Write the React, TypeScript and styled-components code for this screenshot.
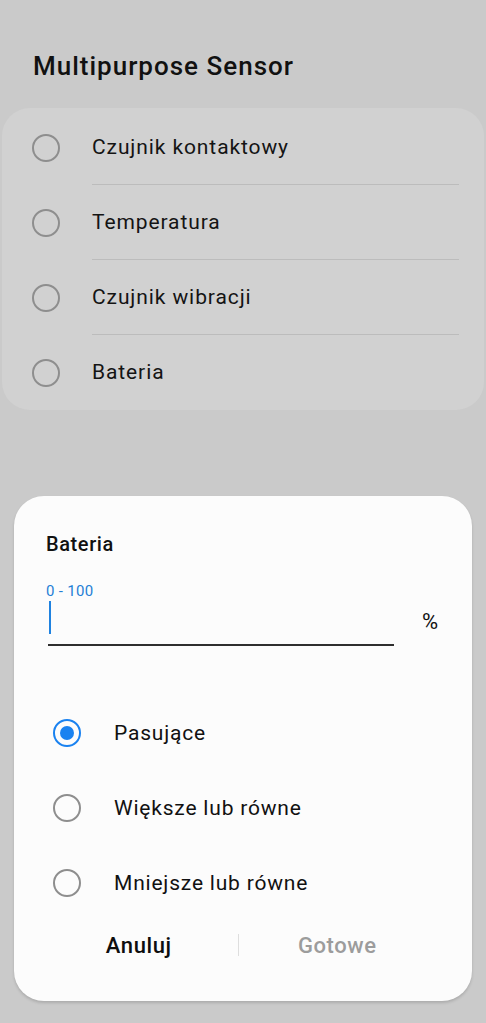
import React from 'react';
import styled, { createGlobalStyle } from 'styled-components';

const GlobalStyle = createGlobalStyle`
  html, body {
    margin: 0;
    padding: 0;
    background: #cacaca;
    font-family: Roboto, "Noto Sans", sans-serif;
  }
`;

const Screen = styled.div`
  width: 486px;
  height: 1023px;
  background: #cacaca;
  position: relative;
  overflow: hidden;
`;

const Header = styled.h1`
  margin: 0;
  padding: 51px 0 0 33px;
  height: 57px;
  font-size: 26px;
  line-height: 30px;
  font-weight: 500;
  color: #111;
  letter-spacing: 1px;
`;

const ListCard = styled.div`
  margin: 0 2px;
  background: #d1d1d1;
  border-radius: 28px;
  padding: 2px 0 0;
  height: 300px;
`;

const ListRow = styled.div`
  display: flex;
  align-items: center;
  height: 75px;
`;

const Circle = styled.span<{ $checked?: boolean; $size: number }>`
  box-sizing: border-box;
  width: ${({ $size }) => $size}px;
  height: ${({ $size }) => $size}px;
  border-radius: 50%;
  border: 2px solid ${({ $checked }) => ($checked ? '#1a82f0' : '#8e8e8e')};
  display: flex;
  align-items: center;
  justify-content: center;
  flex-shrink: 0;
  &::after {
    content: '';
    display: ${({ $checked }) => ($checked ? 'block' : 'none')};
    width: 14px;
    height: 14px;
    border-radius: 50%;
    background: #1a82f0;
  }
`;

const ListLabel = styled.div<{ $divider: boolean }>`
  flex: 1;
  height: 75px;
  margin: 0 25px 0 32px;
  display: flex;
  align-items: center;
  font-size: 21px;
  letter-spacing: 0.9px;
  color: #141414;
  border-bottom: 1px solid ${({ $divider }) => ($divider ? '#bcbcbc' : 'transparent')};
  box-sizing: border-box;
`;

const RowCircleBox = styled.div`
  padding-left: 30px;
  display: flex;
`;

const Dialog = styled.div`
  position: absolute;
  left: 14px;
  top: 496px;
  width: 458px;
  height: 505px;
  background: #fcfcfc;
  border-radius: 30px;
  box-shadow: 0 2px 3px rgba(0, 0, 0, 0.15);
  box-sizing: border-box;
  padding: 36px 32px 0 32px;
  display: flex;
  flex-direction: column;
`;

const DialogTitle = styled.div`
  font-size: 20px;
  font-weight: 500;
  letter-spacing: 0.6px;
  color: #111;
  height: 24px;
  line-height: 24px;
`;

const Hint = styled.div`
  margin-top: 26px;
  font-size: 15px;
  letter-spacing: 0.3px;
  color: #1f7fd6;
  height: 18px;
  line-height: 18px;
`;

const InputRow = styled.div`
  display: flex;
  align-items: center;
`;

const InputField = styled.div`
  width: 346px;
  margin-left: 2px;
  height: 44px;
  border-bottom: 2px solid #2e2e2e;
  display: flex;
  align-items: flex-start;
`;

const Caret = styled.span`
  display: block;
  margin: 1px 0 0 1px;
  width: 2px;
  height: 33px;
  background: #1f82e0;
`;

const Unit = styled.div`
  margin-left: 28px;
  margin-top: -4px;
  font-size: 22px;
  color: #111;
`;

const Options = styled.div`
  margin-top: 49px;
  display: flex;
  flex-direction: column;
`;

const OptionRow = styled.div`
  display: flex;
  align-items: center;
  height: 75px;
  padding-left: 7px;
`;

const OptionLabel = styled.span`
  margin-left: 33px;
  font-size: 21px;
  letter-spacing: 0.8px;
  color: #111;
`;

const Buttons = styled.div`
  display: flex;
  align-items: center;
  margin: 1px 4px 0 -6px;
  height: 48px;
`;

const ActionButton = styled.button<{ $muted?: boolean }>`
  flex: 1;
  background: none;
  border: none;
  font-family: inherit;
  font-size: 22px;
  font-weight: 500;
  letter-spacing: 0.6px;
  color: ${({ $muted }) => ($muted ? '#9c9c9c' : '#0e0e0e')};
  padding: 0;
  height: 48px;
`;

const ButtonDivider = styled.span`
  width: 1px;
  height: 22px;
  background: #dedede;
`;

const items = ['Czujnik kontaktowy', 'Temperatura', 'Czujnik wibracji', 'Bateria'];
const options = ['Pasujące', 'Większe lub równe', 'Mniejsze lub równe'];

const App = () => {
  return (
    <Screen>
      <GlobalStyle />
      <Header>Multipurpose Sensor</Header>
      <ListCard>
        {items.map((item, i) => (
          <ListRow key={item}>
            <RowCircleBox>
              <Circle $size={28} />
            </RowCircleBox>
            <ListLabel $divider={i < items.length - 1}>{item}</ListLabel>
          </ListRow>
        ))}
      </ListCard>
      <Dialog>
        <DialogTitle>Bateria</DialogTitle>
        <Hint>0 - 100</Hint>
        <InputRow>
          <InputField>
            <Caret />
          </InputField>
          <Unit>%</Unit>
        </InputRow>
        <Options>
          {options.map((opt, i) => (
            <OptionRow key={opt}>
              <Circle $size={28} $checked={i === 0} />
              <OptionLabel>{opt}</OptionLabel>
            </OptionRow>
          ))}
        </Options>
        <Buttons>
          <ActionButton>Anuluj</ActionButton>
          <ButtonDivider />
          <ActionButton $muted>Gotowe</ActionButton>
        </Buttons>
      </Dialog>
    </Screen>
  );
};

export default App;
